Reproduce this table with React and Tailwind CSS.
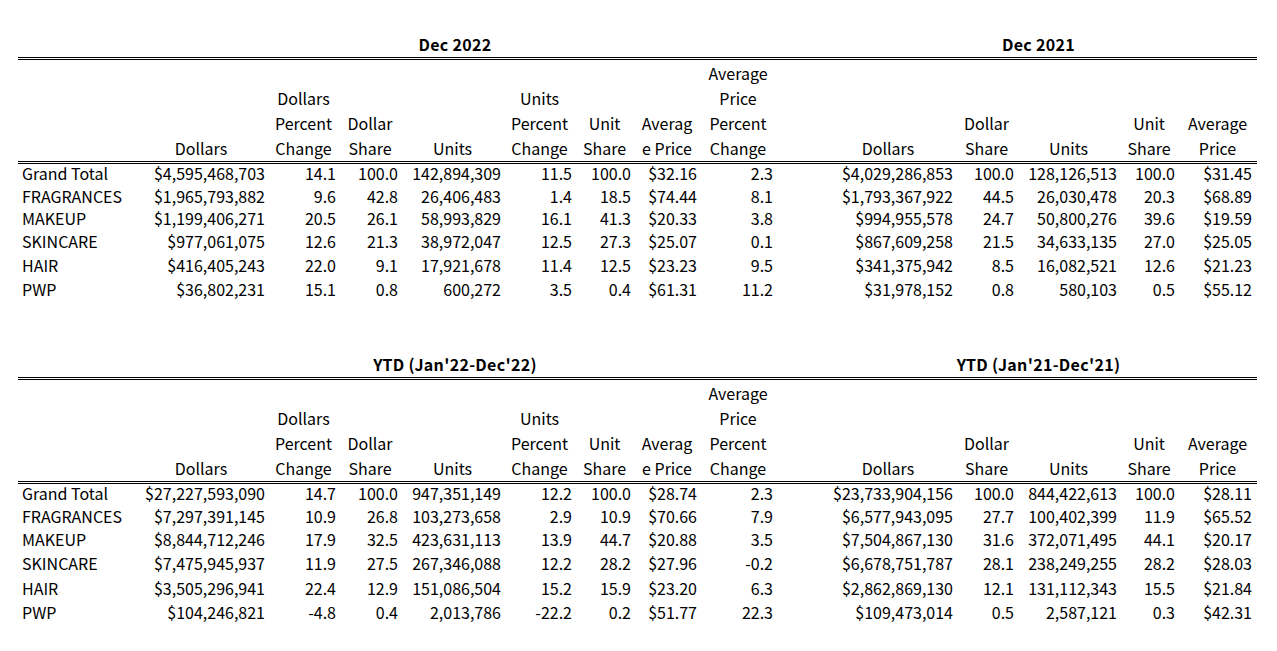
import React from "react";

const GRID =
  "grid grid-cols-[116px_134px_71px_62px_103px_71px_59px_66px_76px_44px_136px_61px_103px_58px_79px]";

const HEADERS = [
  [],
  ["Dollars"],
  ["Dollars", "Percent", "Change"],
  ["Dollar", "Share"],
  ["Units"],
  ["Units", "Percent", "Change"],
  ["Unit", "Share"],
  ["Averag", "e Price"],
  ["Average", "Price", "Percent", "Change"],
  [],
  ["Dollars"],
  ["Dollar", "Share"],
  ["Units"],
  ["Unit", "Share"],
  ["Average", "Price"],
];

const TOP_ROWS = [
  ["Grand Total", "$4,595,468,703", "14.1", "100.0", "142,894,309", "11.5", "100.0", "$32.16", "2.3", "", "$4,029,286,853", "100.0", "128,126,513", "100.0", "$31.45"],
  ["FRAGRANCES", "$1,965,793,882", "9.6", "42.8", "26,406,483", "1.4", "18.5", "$74.44", "8.1", "", "$1,793,367,922", "44.5", "26,030,478", "20.3", "$68.89"],
  ["MAKEUP", "$1,199,406,271", "20.5", "26.1", "58,993,829", "16.1", "41.3", "$20.33", "3.8", "", "$994,955,578", "24.7", "50,800,276", "39.6", "$19.59"],
  ["SKINCARE", "$977,061,075", "12.6", "21.3", "38,972,047", "12.5", "27.3", "$25.07", "0.1", "", "$867,609,258", "21.5", "34,633,135", "27.0", "$25.05"],
  ["HAIR", "$416,405,243", "22.0", "9.1", "17,921,678", "11.4", "12.5", "$23.23", "9.5", "", "$341,375,942", "8.5", "16,082,521", "12.6", "$21.23"],
  ["PWP", "$36,802,231", "15.1", "0.8", "600,272", "3.5", "0.4", "$61.31", "11.2", "", "$31,978,152", "0.8", "580,103", "0.5", "$55.12"],
];

const BOTTOM_ROWS = [
  ["Grand Total", "$27,227,593,090", "14.7", "100.0", "947,351,149", "12.2", "100.0", "$28.74", "2.3", "", "$23,733,904,156", "100.0", "844,422,613", "100.0", "$28.11"],
  ["FRAGRANCES", "$7,297,391,145", "10.9", "26.8", "103,273,658", "2.9", "10.9", "$70.66", "7.9", "", "$6,577,943,095", "27.7", "100,402,399", "11.9", "$65.52"],
  ["MAKEUP", "$8,844,712,246", "17.9", "32.5", "423,631,113", "13.9", "44.7", "$20.88", "3.5", "", "$7,504,867,130", "31.6", "372,071,495", "44.1", "$20.17"],
  ["SKINCARE", "$7,475,945,937", "11.9", "27.5", "267,346,088", "12.2", "28.2", "$27.96", "-0.2", "", "$6,678,751,787", "28.1", "238,249,255", "28.2", "$28.03"],
  ["HAIR", "$3,505,296,941", "22.4", "12.9", "151,086,504", "15.2", "15.9", "$23.20", "6.3", "", "$2,862,869,130", "12.1", "131,112,343", "15.5", "$21.84"],
  ["PWP", "$104,246,821", "-4.8", "0.4", "2,013,786", "-22.2", "0.2", "$51.77", "22.3", "", "$109,473,014", "0.5", "2,587,121", "0.3", "$42.31"],
];

const ROW_H = {
  23: "h-[23px]",
  22: "h-[22px]",
  24: "h-[24px]",
  25: "h-[25px]",
};

function DoubleLine() {
  return <div className="h-[3px] w-[1239px] border-y border-black" />;
}

function Table({ titleLeft, titleRight, rows, heights, className }) {
  return (
    <div className={className}>
      <div className={GRID + " h-[20px] leading-[20px] font-bold tracking-[0.3px]"}>
        <div />
        <div className="col-span-8 text-center whitespace-nowrap">{titleLeft}</div>
        <div />
        <div className="col-span-5 text-center whitespace-nowrap">{titleRight}</div>
      </div>
      <div className="mt-[3px]">
        <DoubleLine />
      </div>
      <div className={GRID + " h-[101px] leading-[25px]"}>
        {HEADERS.map((lines, i) => (
          <div key={i} className="flex flex-col items-center justify-end whitespace-nowrap">
            {lines.map((l) => (
              <span key={l}>{l}</span>
            ))}
          </div>
        ))}
      </div>
      <DoubleLine />
      {rows.map((row, r) => (
        <div key={r} className={GRID + " pt-[1px] leading-[16px] " + ROW_H[heights[r]]}>
          {row.map((cell, c) => (
            <div
              key={c}
              className={
                c === 0
                  ? "pl-[4px] whitespace-nowrap"
                  : c === 14
                  ? "pr-[5px] text-right whitespace-nowrap"
                  : "pr-[3px] text-right whitespace-nowrap"
              }
            >
              {cell}
            </div>
          ))}
        </div>
      ))}
    </div>
  );
}

export default function App() {
  return (
    <div
      className="min-h-[651px] w-[1277px] bg-white pl-[18px] pt-[34px] text-[16px] text-black"
      style={{ fontFamily: '"Noto Sans CJK KR", "Noto Sans", sans-serif' }}
    >
      <Table titleLeft="Dec 2022" titleRight="Dec 2021" rows={TOP_ROWS} heights={[23, 22, 23, 24, 24, 23]} />
      <Table
        className="mt-[51px]"
        titleLeft="YTD (Jan'22-Dec'22)"
        titleRight="YTD (Jan'21-Dec'21)"
        rows={BOTTOM_ROWS}
        heights={[23, 23, 24, 25, 24, 23]}
      />
    </div>
  );
}
